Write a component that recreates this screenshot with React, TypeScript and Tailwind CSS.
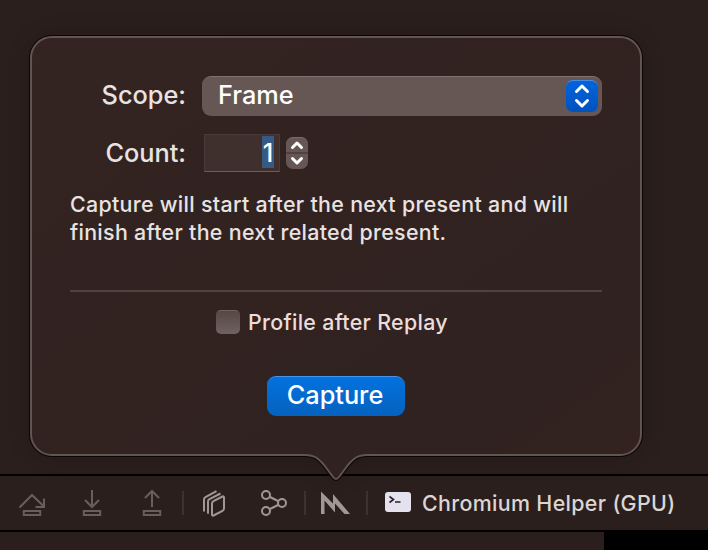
import React from "react";

const outline =
  "M52 37H620A21 21 0 0 1 641 58V434A21 21 0 0 1 620 455H367C357 455 353 459 348 465L339 477Q336 481 333 477L324 465C319 459 315 455 305 455H52A21 21 0 0 1 31 434V58A21 21 0 0 1 52 37Z";

function PopoverFrame() {
  return (
    <svg className="absolute left-0 top-0 overflow-visible" width="708" height="550" viewBox="0 0 708 550" fill="none">
      <defs>
        <linearGradient id="panel" x1="0" y1="0" x2="1" y2="1">
          <stop offset="0" stopColor="#342321" />
          <stop offset=".25" stopColor="#322321" />
          <stop offset=".8" stopColor="#302220" />
          <stop offset="1" stopColor="#342221" />
        </linearGradient>
        <filter id="shade" x="-10%" y="-10%" width="120%" height="125%">
          <feGaussianBlur stdDeviation="12" />
        </filter>
      </defs>
      <path d={outline} fill="#000" opacity=".22" filter="url(#shade)" />
      <path d={outline} stroke="#090606" strokeWidth="4" />
      <path d={outline} fill="url(#panel)" stroke="#635451" strokeWidth="2" />
    </svg>
  );
}

function UpDown({ className, d }: { className: string; d: string }) {
  return (
    <svg className={className} viewBox="0 0 32 32" fill="none" stroke="#fff" strokeWidth="3" strokeLinecap="round" strokeLinejoin="round">
      <path d={d} />
    </svg>
  );
}

function Popover() {
  return (
    <div className="absolute left-0 top-0 h-[480px] w-[672px]">
      <PopoverFrame />
      <div className="relative flex flex-col px-[70px] pt-[76px] text-[25.3px] font-[450] text-[#e8e3e2]">
        <div className="flex h-10 items-center">
          <span className="-mt-[2px] w-[116px] text-right leading-[38px]">Scope:</span>
          <div className="ml-4 flex h-10 w-[400px] items-start justify-between rounded-[9px] border-t border-[#82726f] bg-[#665754] pl-4 pr-1 text-white">
            <span className="leading-[36px]">Frame</span>
            <div className="mt-[3px] h-8 w-8 rounded-[7px] border-t border-[#4a8be2] bg-linear-to-b from-[#0263de] to-[#0153bd]">
              <UpDown className="-mt-px h-8 w-8" d="M10.5 11.500 16 6l5.500 5.500M10.500 20.500l5.500 5.500 5.500-5.500" />
            </div>
          </div>
        </div>
        <div className="mt-[18px] flex h-[38px] items-center">
          <span className="w-[116px] text-right leading-[38px]">Count:</span>
          <div className="ml-[18px] flex h-[38px] w-[76px] justify-end border border-[#4a3b39] border-b-[#6b5d5a] bg-[#3f302e] pr-[5px] pt-px text-white">
            <span className="flex h-8 w-3 justify-center bg-[#365a83] leading-[34px]">1</span>
          </div>
          <div className="relative ml-1.5 h-8 w-[22px] rounded-[7px] border-t border-[#7c6e6b] bg-[#665754]">
            <div className="mt-[14px] h-[2px] bg-[#51423f]" />
            <UpDown className="absolute -left-[5px] -top-px h-8 w-8" d="M11.500 10.500 16 6l4.500 4.500M11.500 21.500 16 26l4.500-4.500" />
          </div>
        </div>
        <p className="mt-[18px] whitespace-nowrap text-[21.400px] leading-7 tracking-[0.31px]">
          Capture will start after the next present and will
          <br />
          finish after the next related present.
        </p>
        <div className="mt-[44px] h-[2px] w-[532px] bg-[#514240]" />
        <div className="ml-[146px] mt-[16px] flex h-7 items-center">
          <span className="h-6 w-6 rounded-[5px] border-t border-[#716360] bg-linear-to-b from-[#564744] to-[#706260]" />
          <span className="ml-2 whitespace-nowrap text-[21.400px] tracking-[0.31px] text-[#ecdcda]">Profile after Replay</span>
        </div>
        <button className="ml-[197px] mt-[40px] flex h-10 w-[138px] justify-center rounded-[9px] border-t border-[#4893e6] bg-linear-to-b from-[#0272df] to-[#0562be] pr-0.5 leading-[36px] text-white">
          Capture
        </button>
      </div>
    </div>
  );
}

function Toolbar() {
  return (
    <div className="flex h-[58px] items-center border-y-2 border-black bg-[#2b1f1e]">
      <svg width="372" height="54" viewBox="0 476 372 54" fill="none" strokeWidth="2">
        <g stroke="#6a5e5d">
          <path d="M19.500 507.500 32 495 44 506.500M44 498.500v8.500h-8.500M23.800 511h16.400v4H23.800z" />
          <path d="M92 490v16M85 500l7 7 7-7M83.800 511h16.400v4H83.800z" />
          <path d="M152 507v-16M145 498l7-7 7 7M143.800 511h16.400v4h-16.400z" />
        </g>
        <g stroke="#3e3231">
          <path d="M183 491v24M305 491v24M367 491v24" />
        </g>
        <g stroke="#a19796" strokeLinejoin="round">
          <path d="M212 503.500Q212 502 213.500 501.200L222.500 496.500Q224 496 224 497.500V508.500Q224 510 222.500 510.800L213.500 515.500Q212 516 212 514.500zM208 513.800V501.500Q208 500 209.500 499.200L220.500 493.500M204 511.500V499.500Q204 498 205.500 497.200L216.500 491.200" />
          <circle cx="266" cy="495" r="4" />
          <circle cx="266" cy="511" r="4" />
          <circle cx="282" cy="503" r="4" />
          <path d="M270 497l8 4M270 509l8-4" />
        </g>
        <path d="M321 491.500 333 503.500V494L350 514H344.500L335 503.500V512.500L324.500 500.500V514H321z" fill="#a19796" />
      </svg>
      <svg className="-mt-[2px] ml-[13px]" width="26" height="20" viewBox="0 0 26 20" fill="none">
        <rect width="26" height="20" rx="3" fill="#e4e2ee" />
        <path d="M4.500 4.500 8.500 7.500l-4 3M10 10h5.500" stroke="#2b1f22" strokeWidth="1.600" />
      </svg>
      <span className="ml-[11px] whitespace-nowrap text-[21.400px] font-[450] tracking-[0.34px] text-[#dbd6d4]">Chromium Helper (GPU)</span>
    </div>
  );
}

export default function App() {
  return (
    <main className="relative flex h-[550px] w-[708px] flex-col overflow-hidden bg-[#2b1f1d] font-['Inter',sans-serif]">
      <div className="h-[474px]" />
      <Toolbar />
      <div className="flex h-[18px] bg-black">
        <div className="w-[604px] bg-[#2b1f1e]" />
      </div>
      <Popover />
    </main>
  );
}
